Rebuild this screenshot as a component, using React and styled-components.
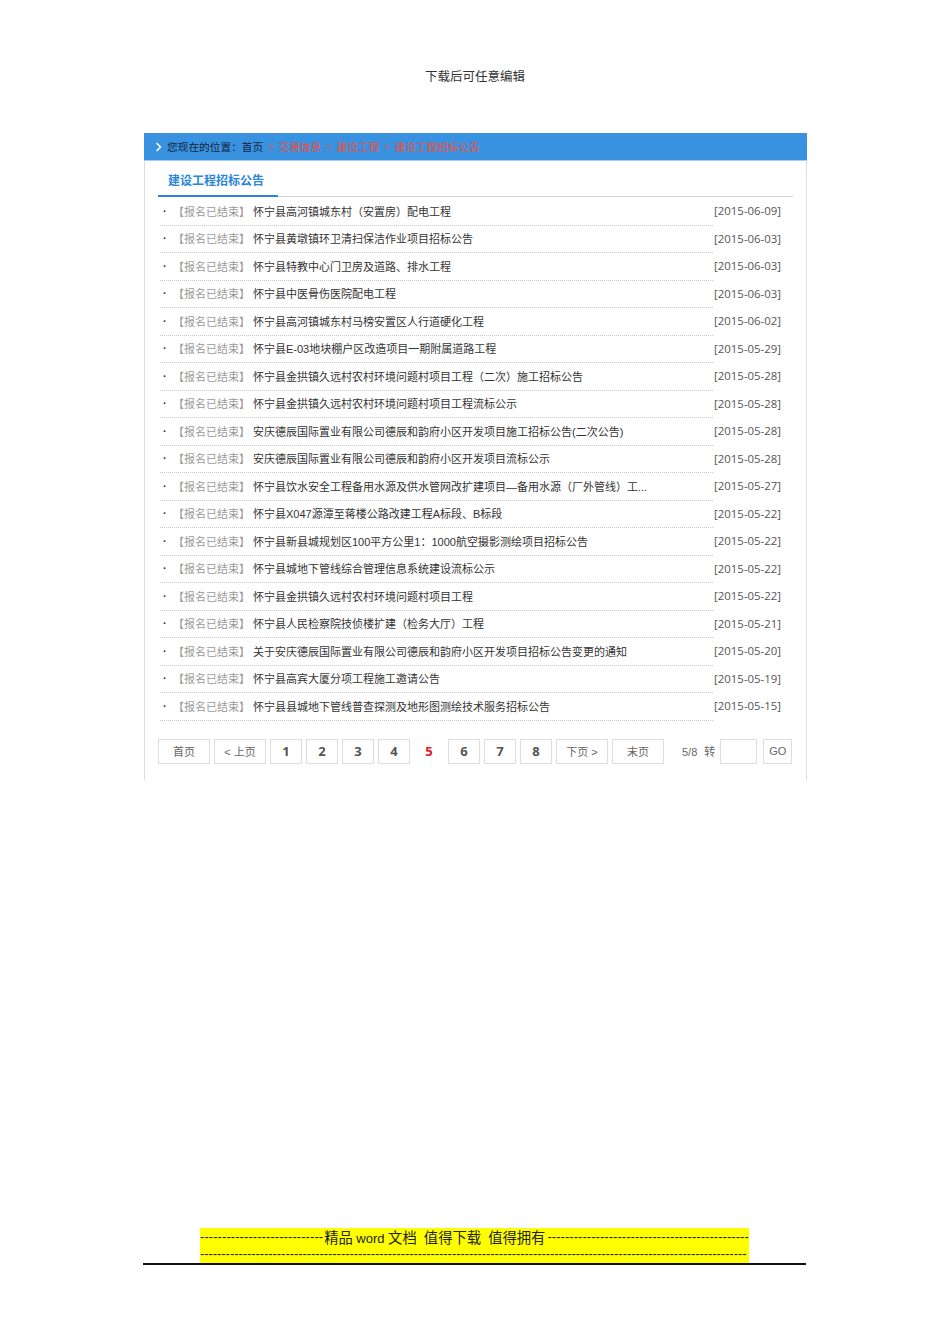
import React from "react";
import styled, { createGlobalStyle } from "styled-components";

const Global = createGlobalStyle`
  html, body { margin: 0; padding: 0; background: #fff; }
  body { font-family: "Liberation Sans", "Noto Sans CJK SC", sans-serif; color: #333; }
  * { box-sizing: border-box; }
`;

const Page = styled.div`
  width: 950px;
  min-height: 1344px;
  padding-top: 67px;
  display: flex;
  flex-direction: column;
  align-items: center;
`;

const TopNote = styled.div`
  font-family: "Liberation Serif", "Noto Sans CJK SC", serif;
  font-size: 12.5px;
  line-height: 20px;
  color: #333;
  text-align: center;
`;

const Panel = styled.section`
  margin-top: 46px;
  width: 663px;
  align-self: flex-start;
  margin-left: 144px;
`;

const CrumbBar = styled.div`
  height: 28px;
  background: #3992e0;
  border-bottom: 1px solid #a5cdf0;
  display: flex;
  align-items: center;
  padding-left: 11px;
  font-size: 10.7px;
  gap: 4px;
`;

const CrumbHome = styled.span`
  color: #15233a;
`;

const CrumbLink = styled.span`
  color: #e8503e;
`;

const CrumbSep = styled.span`
  color: #e8503e;
  font-size: 9px;
  margin: 0 1px;
`;

const Body = styled.div`
  border-left: 1px solid #dcdcdc;
  border-right: 1px solid #dcdcdc;
  padding: 0 13px 16px 13px;
`;

const TabBar = styled.div`
  display: flex;
  border-bottom: 1px solid #d3d3d3;
`;

const Tab = styled.div`
  width: 120px;
  padding: 12px 0 6px 10px;
  line-height: 16px;
  font-size: 12px;
  font-weight: bold;
  color: #2b86d9;
  border-bottom: 2px solid #2b86d9;
  margin-bottom: -1px;
`;

const List = styled.ul`
  list-style: none;
  margin: 0;
  padding: 1px 12px 0 2px;
`;

const Row = styled.li`
  display: flex;
  align-items: stretch;
  height: 27.5px;
`;

const RowMain = styled.div`
  flex: 1;
  display: flex;
  align-items: center;
  border-bottom: 1px dotted #c8c8c8;
  font-size: 11px;
  white-space: nowrap;
  overflow: hidden;
  padding-bottom: 1px;
`;

const Bullet = styled.span`
  width: 13px;
  padding-left: 3px;
  color: #333;
  font-weight: bold;
`;

const Status = styled.span`
  width: 80px;
  color: #9a9a9a;
`;

const Title = styled.span`
  color: #333;
`;

const DateCell = styled.div`
  width: 68px;
  display: flex;
  align-items: center;
  justify-content: flex-end;
  padding-bottom: 2px;
  font-family: "Open Sans", "Liberation Sans", sans-serif;
  font-size: 11.4px;
  color: #555;
`;

const Pager = styled.div`
  display: flex;
  align-items: center;
  gap: 4px;
  margin-top: 18px;
`;

const PageBtn = styled.div`
  height: 25px;
  width: ${(p) => p.$w || 32}px;
  border: 1px solid ${(p) => (p.$active ? "transparent" : "#dedede")};
  display: flex;
  align-items: center;
  justify-content: center;
  font-family: ${(p) => (p.$num ? '"Open Sans", "Liberation Sans", sans-serif' : '"Liberation Sans", "Noto Sans CJK SC", sans-serif')};
  font-size: ${(p) => (p.$num ? 13 : 11)}px;
  font-weight: ${(p) => (p.$num ? "bold" : "normal")};
  color: ${(p) => (p.$active ? "#e3161c" : p.$num ? "#555" : "#666")};
  background: #fff;
`;

const PageInfo = styled.span`
  font-size: 11px;
  color: #666;
  margin-left: 14px;
  margin-right: 1px;
  word-spacing: 4px;
`;

const JumpInput = styled.div`
  width: 37px;
  height: 25px;
  border: 1px solid #dedede;
`;

const Footer = styled.div`
  margin-top: 448px;
  width: 663px;
  align-self: flex-start;
  margin-left: 143px;
  border-bottom: 2px solid #111;
  padding-left: 57px;
`;

const Highlight = styled.div`
  width: 549px;
  background: #ffff00;
  color: #222;
`;

const Line = styled.div`
  display: flex;
  align-items: center;
  height: 17.5px;
  white-space: nowrap;
`;

const Dash = styled.span`
  font-family: "Liberation Sans", sans-serif;
  font-size: 13px;
  letter-spacing: ${(p) => p.$ls ?? 0}px;
  white-space: nowrap;
`;

const Slogan = styled.span`
  font-family: "Liberation Serif", "Noto Sans CJK SC", serif;
  font-size: 14.3px;
  padding: 0 2px 0 1px;
`;

const Word = styled.span`
  font-family: "Liberation Sans", sans-serif;
  font-size: 13px;
`;

const rows = [
  ["怀宁县高河镇城东村（安置房）配电工程", "2015-06-09"],
  ["怀宁县黄墩镇环卫清扫保洁作业项目招标公告", "2015-06-03"],
  ["怀宁县特教中心门卫房及道路、排水工程", "2015-06-03"],
  ["怀宁县中医骨伤医院配电工程", "2015-06-03"],
  ["怀宁县高河镇城东村马榜安置区人行道硬化工程", "2015-06-02"],
  ["怀宁县E-03地块棚户区改造项目一期附属道路工程", "2015-05-29"],
  ["怀宁县金拱镇久远村农村环境问题村项目工程（二次）施工招标公告", "2015-05-28"],
  ["怀宁县金拱镇久远村农村环境问题村项目工程流标公示", "2015-05-28"],
  ["安庆德辰国际置业有限公司德辰和韵府小区开发项目施工招标公告(二次公告)", "2015-05-28"],
  ["安庆德辰国际置业有限公司德辰和韵府小区开发项目流标公示", "2015-05-28"],
  ["怀宁县饮水安全工程备用水源及供水管网改扩建项目—备用水源（厂外管线）工...", "2015-05-27"],
  ["怀宁县X047源潭至蒋楼公路改建工程A标段、B标段", "2015-05-22"],
  ["怀宁县新县城规划区100平方公里1：1000航空摄影测绘项目招标公告", "2015-05-22"],
  ["怀宁县城地下管线综合管理信息系统建设流标公示", "2015-05-22"],
  ["怀宁县金拱镇久远村农村环境问题村项目工程", "2015-05-22"],
  ["怀宁县人民检察院技侦楼扩建（检务大厅）工程", "2015-05-21"],
  ["关于安庆德辰国际置业有限公司德辰和韵府小区开发项目招标公告变更的通知", "2015-05-20"],
  ["怀宁县高宾大厦分项工程施工邀请公告", "2015-05-19"],
  ["怀宁县县城地下管线普查探测及地形图测绘技术服务招标公告", "2015-05-15"],
];

const Chevron = () => (
  <svg width="7" height="10" viewBox="0 0 7 10" style={{ marginRight: 1 }}>
    <path d="M1.5 1 L5.5 5 L1.5 9" fill="none" stroke="#fff" strokeWidth="1.5" />
  </svg>
);

export default function App() {
  return (
    <>
      <Global />
      <Page>
        <TopNote>下载后可任意编辑</TopNote>
        <Panel>
          <CrumbBar>
            <Chevron />
            <CrumbHome>您现在的位置：首页</CrumbHome>
            <CrumbSep>&gt;</CrumbSep>
            <CrumbLink>交易信息</CrumbLink>
            <CrumbSep>&gt;</CrumbSep>
            <CrumbLink>建设工程</CrumbLink>
            <CrumbSep>&gt;</CrumbSep>
            <CrumbLink>建设工程招标公告</CrumbLink>
          </CrumbBar>
          <Body>
            <TabBar>
              <Tab>建设工程招标公告</Tab>
            </TabBar>
            <List>
              {rows.map(([t, d], i) => (
                <Row key={i}>
                  <RowMain>
                    <Bullet>·</Bullet>
                    <Status>【报名已结束】</Status>
                    <Title>{t}</Title>
                  </RowMain>
                  <DateCell>[{d}]</DateCell>
                </Row>
              ))}
            </List>
            <Pager>
              <PageBtn $w={52}>首页</PageBtn>
              <PageBtn $w={52}>&lt; 上页</PageBtn>
              {[1, 2, 3, 4, 5, 6, 7, 8].map((n) => (
                <PageBtn key={n} $num $active={n === 5} $w={n === 5 ? 30 : 32}>
                  {n}
                </PageBtn>
              ))}
              <PageBtn $w={52}>下页 &gt;</PageBtn>
              <PageBtn $w={52}>末页</PageBtn>
              <PageInfo>5/8 转</PageInfo>
              <JumpInput />
              <PageBtn $w={29} style={{ marginLeft: 2 }}>GO</PageBtn>
            </Pager>
          </Body>
        </Panel>
        <Footer>
          <Highlight>
            <Line>
              <Dash $ls={0.07}>{"-".repeat(28)}</Dash>
              <Slogan>
                精品 <Word>word</Word> 文档&nbsp;&nbsp;值得下载&nbsp;&nbsp;值得拥有
              </Slogan>
              <Dash $ls={0.05}>{"-".repeat(46)}</Dash>
            </Line>
            <Line>
              <Dash $ls={-0.06}>{"-".repeat(128)}</Dash>
            </Line>
          </Highlight>
        </Footer>
      </Page>
    </>
  );
}
